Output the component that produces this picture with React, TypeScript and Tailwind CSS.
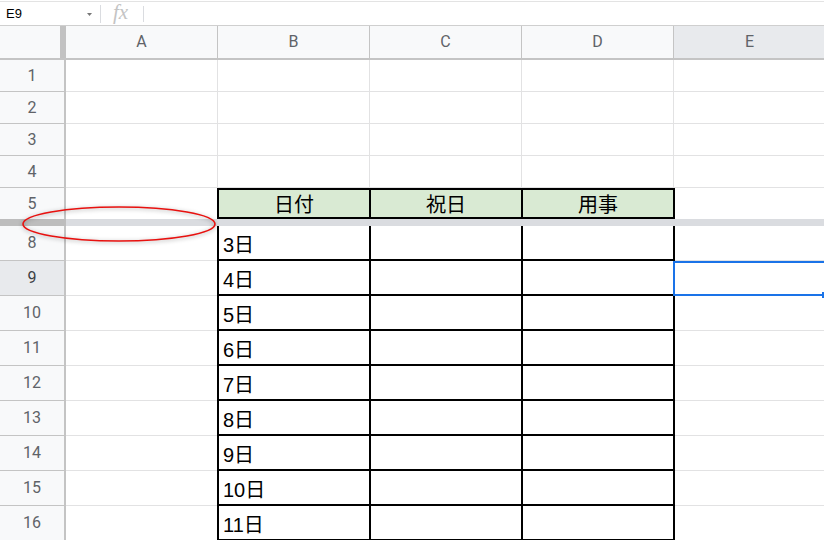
import React from "react";

const bodyRows = [
  { n: 8, t: "3日" },
  { n: 9, t: "4日", sel: true },
  { n: 10, t: "5日" },
  { n: 11, t: "6日" },
  { n: 12, t: "7日" },
  { n: 13, t: "8日" },
  { n: 14, t: "9日" },
  { n: 15, t: "10日" },
  { n: 16, t: "11日" },
];

function RowHead({ n, sel, h }: { n: number; sel?: boolean; h: string }) {
  return (
    <div
      className={`${h} w-[66px] shrink-0 flex items-center justify-center border-r-2 border-b border-[#c4c4c4] text-[16px] font-['Roboto','Liberation_Sans',sans-serif] ${
        sel ? "bg-[#e8eaed] text-[#3c4043]" : "bg-[#f8f9fa] text-[#5f6368]"
      }`}
    >
      {n}
    </div>
  );
}

function EmptyRow({ n }: { n: number }) {
  return (
    <div className="flex h-[32px]">
      <RowHead n={n} h="h-[32px]" />
      <div className="w-[152px] shrink-0 border-r border-b border-[#e2e2e3]" />
      <div className="w-[152px] shrink-0 border-r border-b border-[#e2e2e3]" />
      <div className="w-[152px] shrink-0 border-r border-b border-[#e2e2e3]" />
      <div className="w-[152px] shrink-0 border-r border-b border-[#e2e2e3]" />
      <div className="w-[152px] shrink-0 border-r border-b border-[#e2e2e3]" />
    </div>
  );
}

export default function App() {
  return (
    <div className="relative w-[824px] h-[540px] overflow-hidden bg-white pt-[1px] font-['Liberation_Sans','Noto_Sans_CJK_JP',sans-serif]">
      {/* formula bar */}
      <div className="h-[25px] flex items-center border-t border-b border-t-[#e3e3e3] border-b-[#cfcfcf] bg-white">
        <div className="w-[100px] shrink-0 flex items-center justify-between pl-[6px] pr-[8px]">
          <span className="text-[13px] text-black leading-none">E9</span>
          <svg width="5" height="3" viewBox="0 0 5 3" className="mt-[1px]">
            <polygon points="0,0 5,0 2.5,3" fill="#777" />
          </svg>
        </div>
        <div className="w-px h-[18px] bg-[#dadce0]" />
        <span className="ml-[12px] w-[30px] text-[21px] leading-none italic text-[#c4c4c4] font-['Liberation_Serif',serif] -mt-[2px]">
          fx
        </span>
        <div className="w-px h-[16px] bg-[#dadce0]" />
      </div>

      {/* column header */}
      <div className="flex h-[34px] border-b-2 border-[#c4c4c4] font-['Roboto','Liberation_Sans',sans-serif] text-[16px] text-[#5f6368]">
        <div className="w-[60px] shrink-0 bg-[#f8f9fa]" />
        <div className="w-[6px] shrink-0 bg-[#c2c2c2]" />
        {["A", "B", "C", "D"].map((c) => (
          <div
            key={c}
            className="w-[152px] shrink-0 bg-[#f8f9fa] border-r border-[#c4c4c4] flex items-center justify-center"
          >
            {c}
          </div>
        ))}
        <div className="w-[152px] shrink-0 bg-[#e8eaed] border-r border-[#c4c4c4] flex items-center justify-center">
          E
        </div>
      </div>

      {[1, 2, 3, 4].map((n) => (
        <EmptyRow key={n} n={n} />
      ))}

      {/* row 5 header of table */}
      <div className="flex h-[31px]">
        <div className="h-[31px] w-[66px] shrink-0 flex items-center justify-center border-r-2 border-[#c4c4c4] bg-[#f8f9fa] text-[16px] text-[#5f6368] font-['Roboto','Liberation_Sans',sans-serif]">
          5
        </div>
        <div className="w-[151px] shrink-0" />
        {["日付", "祝日"].map((t) => (
          <div
            key={t}
            className="w-[152px] shrink-0 border-l-2 border-t-2 border-b-2 border-black bg-[#d9ead3] flex items-end justify-center text-[20px] leading-[24px] text-black"
          >
            {t}
          </div>
        ))}
        <div className="w-[154px] shrink-0 border-l-2 border-r-2 border-t-2 border-b-2 border-black bg-[#d9ead3] flex items-end justify-center text-[20px] leading-[24px] text-black">
          用事
        </div>
        <div className="w-[152px] shrink-0 border-r border-[#e2e2e3]" />
      </div>

      {/* hidden-rows band */}
      <div className="flex h-[7px]">
        <div className="w-[66px] shrink-0 bg-[#bdbdbd]" />
        <div className="flex-1 bg-[#dadce0]" />
      </div>

      {bodyRows.map((r) => (
        <div key={r.n} className="flex h-[35px]">
          <RowHead n={r.n} sel={r.sel} h="h-[35px]" />
          <div className="w-[151px] shrink-0 border-b border-[#e2e2e3]" />
          <div className="w-[152px] shrink-0 border-l-2 border-b-2 border-black flex items-end pl-[4px] pb-[2px] text-[20px] leading-[24px] text-black">
            {r.t}
          </div>
          <div className="w-[152px] shrink-0 border-l-2 border-b-2 border-black" />
          <div className="w-[154px] shrink-0 border-l-2 border-r-2 border-b-2 border-black" />
          <div className="relative w-[150px] shrink-0 border-r border-b border-[#e2e2e3]">
            {r.sel && (
              <>
                <div className="absolute left-[-2px] top-0 w-[153px] h-[35px] border-2 border-[#1a73e8]" />
                <div className="absolute left-[147px] top-[31px] w-[6px] h-[6px] bg-[#1a73e8]" />
              </>
            )}
          </div>
        </div>
      ))}

      {/* red ellipse annotation */}
      <svg
        className="absolute left-[21px] top-[205px] drop-shadow-[0_1px_2px_rgba(0,0,0,0.35)]"
        width="200"
        height="40"
        viewBox="0 0 200 40"
      >
        <ellipse cx="98" cy="19" rx="96" ry="17" fill="none" stroke="#e8110f" strokeWidth="1.6" />
      </svg>
    </div>
  );
}
